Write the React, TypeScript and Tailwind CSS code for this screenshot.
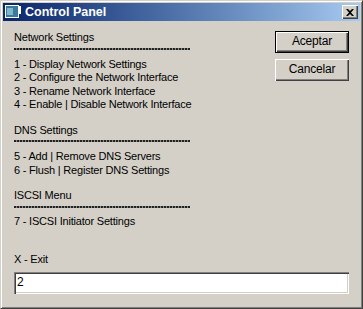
import React from "react";

const Dots = () => (
  <div
    className="h-[2px] w-[176px] mt-[3px]"
    style={{
      backgroundImage:
        "repeating-linear-gradient(90deg, #222 0px, #222 2px, #8a8a8a 2px, #8a8a8a 3px)",
    }}
  />
);

const Btn = ({ label, def }: { label: string; def?: boolean }) => (
  <div
    className={
      "w-[74px] h-[22px] flex items-center justify-center bg-[#d4d0c8] text-[12px] tracking-[-0.2px] text-black " +
      (def
        ? "border border-black shadow-[inset_1px_1px_0_#fff,inset_-1px_-1px_0_#404040,inset_-2px_-2px_0_#808080]"
        : "shadow-[inset_1px_1px_0_#fff,inset_-1px_-1px_0_#404040,inset_-2px_-2px_0_#808080]")
    }
  >
    {label}
  </div>
);

export default function App() {
  return (
    <div
      className="w-[363px] h-[309px] bg-[#d4d0c8] border-t border-l border-[#d4d0c8] border-r border-b border-r-[#404040] border-b-[#404040] shadow-[inset_1px_1px_0_#fff,inset_-1px_-1px_0_#808080] p-[2px] flex flex-col overflow-hidden"
      style={{ fontFamily: "'Liberation Sans', Arial, sans-serif" }}
    >
      <div className="h-[18px] shrink-0 flex items-center bg-gradient-to-r from-[#0a246a] to-[#a6caf0] pl-[2px] pr-[2px]">
        <svg width="16" height="14" viewBox="0 0 16 14" className="mr-[4px]">
          <rect x="0" y="0" width="14" height="13" fill="#ffffff" />
          <rect x="1" y="1" width="12" height="11" fill="#3a7a9a" />
          <rect x="2" y="3" width="6" height="7" fill="#7fb6c8" />
          <rect x="14" y="1" width="2" height="8" fill="#ffffff" />
        </svg>
        <span className="text-white font-bold text-[12.5px] leading-none">
          Control Panel
        </span>
        <div className="ml-auto w-[16px] h-[14px] bg-[#d4d0c8] shadow-[inset_1px_1px_0_#fff,inset_-1px_-1px_0_#404040,inset_-2px_-2px_0_#808080] flex items-center justify-center">
          <svg width="8" height="7" viewBox="0 0 8 7">
            <path d="M0 0 L2 0 L4 2 L6 0 L8 0 L5 3.5 L8 7 L6 7 L4 5 L2 7 L0 7 L3 3.5 Z" fill="#000" />
          </svg>
        </div>
      </div>
      <div className="flex-1 flex flex-col px-[11px] pt-[10px] text-[11px] tracking-[-0.2px] text-black leading-[13.5px]">
        <div className="flex">
          <div className="flex-1 flex flex-col">
            <div>Network Settings</div>
            <Dots />
            <div className="mt-[8px]">1 - Display Network Settings</div>
            <div>2 - Configure the Network Interface</div>
            <div>3 - Rename Network Interface</div>
            <div>4 - Enable | Disable Network Interface</div>
            <div className="mt-[12px]">DNS Settings</div>
            <Dots />
            <div className="mt-[8px]">5 - Add | Remove DNS Servers</div>
            <div>6 - Flush | Register DNS Settings</div>
            <div className="mt-[12px]">ISCSI Menu</div>
            <Dots />
            <div className="mt-[7px]">7 - ISCSI Initiator Settings</div>
          </div>
          <div className="flex flex-col gap-[6px]">
            <Btn label="Aceptar" def />
            <Btn label="Cancelar" />
          </div>
        </div>
        <div className="mt-[25px]">X - Exit</div>
        <div className="mt-[5px] w-[335px] h-[22px] bg-white shadow-[inset_1px_1px_0_#808080,inset_2px_2px_0_#404040,inset_-1px_-1px_0_#fff,inset_-2px_-2px_0_#d4d0c8] pl-[3px] flex items-center text-[12px]">
          2
        </div>
      </div>
    </div>
  );
}
